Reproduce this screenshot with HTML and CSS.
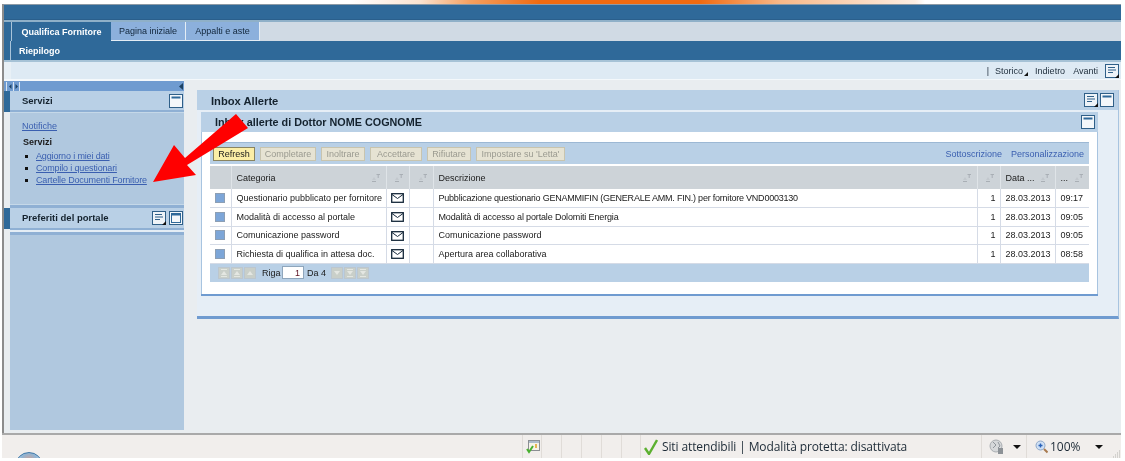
FILE: index.html
```html
<!DOCTYPE html>
<html lang="it">
<head>
    <meta charset="UTF-8">
    <title>Inbox Allerte</title>
    <link rel="stylesheet" href="styles.css">
</head>
<body>
    <svg class="icon-defs" width="0" height="0">
        <symbol id="i-menu" viewBox="0 0 14 14">
            <rect x="0.5" y="0.5" width="13" height="13" fill="#eef3f8" stroke="#2f5f88"/>
            <path d="M3 3.500h7M3 6h8M3 8.500h5" stroke="#2f5f88" fill="none"/>
            <path d="M10 14h4v-4z" fill="#111"/>
        </symbol>
        <symbol id="i-min" viewBox="0 0 14 14">
            <rect x="0.5" y="0.5" width="13" height="13" fill="#f4f7fa" stroke="#2f5f88"/>
            <rect x="2.500" y="2.500" width="9" height="2" fill="#2f6999"/>
        </symbol>
        <symbol id="i-max" viewBox="0 0 14 14">
            <rect x="0.5" y="0.5" width="13" height="13" fill="#f4f7fa" stroke="#2f5f88"/>
            <rect x="2.500" y="2.500" width="9" height="9" fill="none" stroke="#2f6999"/>
            <rect x="2.500" y="2.500" width="9" height="2" fill="#2f6999"/>
        </symbol>
        <symbol id="i-sort" viewBox="0 0 8 8">
            <path d="M2 3 4 6H0z" fill="#c2c8cd"/>
            <path d="M0 7.500h4" stroke="#a9afb5"/>
            <path d="M4.500 .5h3.500M6.200 .5v3.500" stroke="#a9afb5" fill="none"/>
        </symbol>
        <symbol id="i-mail" viewBox="0 0 13 10">
            <rect x="0.7" y="0.7" width="11.6" height="8.6" fill="#fff" stroke="#16283a" stroke-width="1.3"/>
            <path d="M1 1.500 6.500 5.500 12 1.500" fill="none" stroke="#16283a"/>
        </symbol>
        <symbol id="i-pg-up" viewBox="0 0 12 12">
            <rect x="0.500" y="0.500" width="11" height="11" fill="#c9cfc9" stroke="#bcc6ce"/>
            <path d="M6 4 9 8H3z" fill="#e4e7e2"/>
        </symbol>
        <symbol id="i-pg-first" viewBox="0 0 12 12">
            <rect x="0.500" y="0.500" width="11" height="11" fill="#c9cfc9" stroke="#bcc6ce"/>
            <path d="M6 4 9 8H3z" fill="#e4e7e2"/>
            <path d="M3 2.500h6M3 9.500h6" stroke="#e4e7e2"/>
        </symbol>
        <symbol id="i-pg-down" viewBox="0 0 12 12">
            <rect x="0.500" y="0.500" width="11" height="11" fill="#c9cfc9" stroke="#bcc6ce"/>
            <path d="M6 8 9 4H3z" fill="#e4e7e2"/>
        </symbol>
        <symbol id="i-pg-last" viewBox="0 0 12 12">
            <rect x="0.500" y="0.500" width="11" height="11" fill="#c9cfc9" stroke="#bcc6ce"/>
            <path d="M6 8 9 4H3z" fill="#e4e7e2"/>
            <path d="M3 2.500h6M3 9.500h6" stroke="#e4e7e2"/>
        </symbol>
    </svg>

    <div class="page">
        <div class="banner"></div>

        <div class="shell">
            <div class="masthead"></div>

            <div class="tabbar">
                <span class="tab tab-active">Qualifica Fornitore</span>
                <span class="tab tab-home">Pagina iniziale</span>
                <span class="tab tab-bids">Appalti e aste</span>
            </div>
            <div class="subnav"><span class="subnav-item">Riepilogo</span></div>

            <div class="toolstrip">
                <span class="tool-sep">|</span>
                <span class="tool-link tool-history">Storico</span>
                <span class="tool-link tool-back">Indietro</span>
                <span class="tool-link tool-next">Avanti</span>
                <svg class="icon-14 tool-menu"><use href="#i-menu"/></svg>
            </div>

            <div class="workspace">
                <div class="sidebar">
                    <div class="sidebar-grip">
                        <svg class="grip-left" width="20" height="9" viewBox="0 0 20 9">
                            <path d="M.5 0v9M7.500 0v9M13.500 0v9" stroke="#d9e5f0"/>
                            <path d="M5.500 2v5L3 4.500zM9.500 2v5L12 4.500z" fill="#1d4263"/>
                        </svg>
                        <svg width="4" height="7" viewBox="0 0 4 7"><path d="M4 0v7L0 3.500z" fill="#1d4263"/></svg>
                    </div>

                    <div class="side-head">
                        <span class="side-title">Servizi</span>
                        <svg class="icon-14"><use href="#i-min"/></svg>
                    </div>
                    <div class="side-body">
                        <a class="side-link side-top" href="#">Notifiche</a>
                        <div class="side-label">Servizi</div>
                        <ul class="side-list">
                            <li><a class="side-link" href="#">Aggiorno i miei dati</a></li>
                            <li><a class="side-link" href="#">Compilo i questionari</a></li>
                            <li><a class="side-link" href="#">Cartelle Documenti Fornitore</a></li>
                        </ul>
                    </div>

                    <div class="side-head side-head-fav">
                        <span class="side-title">Preferiti del portale</span>
                        <svg class="icon-14"><use href="#i-menu"/></svg>
                        <svg class="icon-14"><use href="#i-max"/></svg>
                    </div>
                    <div class="side-rest"></div>
                </div>

                <div class="main">
                    <div class="outer-panel">
                        <div class="outer-head">
                            <span class="outer-title">Inbox Allerte</span>
                            <svg class="icon-14"><use href="#i-menu"/></svg>
                            <svg class="icon-14"><use href="#i-min"/></svg>
                        </div>
                        <div class="inner-panel">
                            <div class="inner-head">
                                <span class="inner-title">Inbox allerte di Dottor NOME COGNOME</span>
                                <svg class="icon-14"><use href="#i-min"/></svg>
                            </div>
                            <div class="inner-body">
                                <div class="actions">
                                    <button class="btn btn-on">Refresh</button>
                                    <button class="btn btn-complete">Completare</button>
                                    <button class="btn btn-forward">Inoltrare</button>
                                    <button class="btn btn-accept">Accettare</button>
                                    <button class="btn btn-refuse">Rifiutare</button>
                                    <button class="btn btn-read">Impostare su 'Letta'</button>
                                    <a class="action-link action-sub" href="#">Sottoscrizione</a>
                                    <a class="action-link" href="#">Personalizzazione</a>
                                </div>

                                <table class="alerts">
                                    <colgroup>
                                        <col class="c-sel"><col class="c-cat"><col class="c-mail"><col class="c-flag">
                                        <col class="c-desc"><col class="c-num"><col class="c-date"><col class="c-time">
                                    </colgroup>
                                    <thead>
                                        <tr>
                                            <th></th>
                                            <th>Categoria<svg class="sort"><use href="#i-sort"/></svg></th>
                                            <th><svg class="sort"><use href="#i-sort"/></svg></th>
                                            <th><svg class="sort"><use href="#i-sort"/></svg></th>
                                            <th>Descrizione<svg class="sort"><use href="#i-sort"/></svg></th>
                                            <th><svg class="sort"><use href="#i-sort"/></svg></th>
                                            <th>Data ...<svg class="sort"><use href="#i-sort"/></svg></th>
                                            <th>...<svg class="sort"><use href="#i-sort"/></svg></th>
                                        </tr>
                                    </thead>
                                    <tbody>
                                        <tr>
                                            <td><span class="sel-box"></span></td>
                                            <td>Questionario pubblicato per fornitore</td>
                                            <td class="mid"><svg class="mail"><use href="#i-mail"/></svg></td>
                                            <td></td>
                                            <td class="tight-more">Pubblicazione questionario GENAMMIFIN (GENERALE AMM. FIN.) per fornitore VND0003130</td>
                                            <td class="num">1</td>
                                            <td>28.03.2013</td>
                                            <td>09:17</td>
                                        </tr>
                                        <tr class="row-tall">
                                            <td><span class="sel-box"></span></td>
                                            <td>Modalità di accesso al portale</td>
                                            <td class="mid"><svg class="mail"><use href="#i-mail"/></svg></td>
                                            <td></td>
                                            <td class="tight">Modalità di accesso al portale Dolomiti Energia</td>
                                            <td class="num">1</td>
                                            <td>28.03.2013</td>
                                            <td>09:05</td>
                                        </tr>
                                        <tr>
                                            <td><span class="sel-box"></span></td>
                                            <td>Comunicazione password</td>
                                            <td class="mid"><svg class="mail"><use href="#i-mail"/></svg></td>
                                            <td></td>
                                            <td>Comunicazione password</td>
                                            <td class="num">1</td>
                                            <td>28.03.2013</td>
                                            <td>09:05</td>
                                        </tr>
                                        <tr class="row-tall">
                                            <td><span class="sel-box"></span></td>
                                            <td>Richiesta di qualifica in attesa doc.</td>
                                            <td class="mid"><svg class="mail"><use href="#i-mail"/></svg></td>
                                            <td></td>
                                            <td>Apertura area collaborativa</td>
                                            <td class="num">1</td>
                                            <td>28.03.2013</td>
                                            <td>08:58</td>
                                        </tr>
                                    </tbody>
                                </table>

                                <div class="pager">
                                    <svg class="pg"><use href="#i-pg-first"/></svg>
                                    <svg class="pg"><use href="#i-pg-first"/></svg>
                                    <svg class="pg"><use href="#i-pg-up"/></svg>
                                    <span class="pg-label">Riga</span>
                                    <span class="pg-input">1</span>
                                    <span class="pg-of">Da 4</span>
                                    <svg class="pg"><use href="#i-pg-down"/></svg>
                                    <svg class="pg"><use href="#i-pg-last"/></svg>
                                    <svg class="pg"><use href="#i-pg-last"/></svg>
                                </div>
                            </div>
                        </div>
                    </div>
                </div>
            </div>

            <div class="statusbar">
                <span class="st-cell st-a"><span class="orb"></span></span>
                <span class="st-cell st-icon">
                    <svg width="15" height="15" viewBox="0 0 15 15">
                        <rect x="2.500" y="1.500" width="11" height="10" fill="#f5f3e8" stroke="#8b8f93"/>
                        <rect x="3" y="2" width="10" height="2" fill="#aebccc"/>
                        <path d="M10 5v4" stroke="#e0a020" stroke-width="1.500"/>
                        <path d="M1 10l2 3 4-6" fill="none" stroke="#48b030" stroke-width="2"/>
                    </svg>
                </span>
                <span class="st-cell st-b"></span>
                <span class="st-cell st-b"></span>
                <span class="st-cell st-b"></span>
                <span class="st-cell st-b"></span>
                <span class="st-cell st-b st-b-last"></span>
                <span class="st-cell st-zone">
                    <svg width="14" height="16" viewBox="0 0 14 16"><path d="M1 9l4 6 8-14" fill="none" stroke="#5cb030" stroke-width="2.400"/></svg>
                    <span class="st-text st-zone-text">Siti attendibili | Modalità protetta: disattivata</span>
                </span>
                <span class="st-cell st-globe">
                    <svg width="16" height="16" viewBox="0 0 16 16">
                        <circle cx="7" cy="7" r="6" fill="#d6d8da" stroke="#a9adb1"/>
                        <path d="M4 3l3 3-3 3M9 3l2 4-2 2" fill="none" stroke="#8f959a"/>
                        <rect x="9" y="9" width="5" height="6" fill="#8c9196"/>
                    </svg>
                    <span class="st-arrow"></span>
                </span>
                <span class="st-cell st-zoom">
                    <svg width="13" height="14" viewBox="0 0 13 14">
                        <circle cx="5.500" cy="5.500" r="4.500" fill="#cfe0f5" stroke="#8fa8c8"/>
                        <path d="M3.500 5.500h4M5.500 3.500v4" stroke="#2a62b8" stroke-width="1.400"/>
                        <path d="M9 9l3.500 3.500" stroke="#a87a50" stroke-width="2"/>
                    </svg>
                    <span class="st-text st-pct">100%</span>
                    <span class="st-arrow st-arrow-zoom"></span>
                </span>
                <svg class="st-grip" width="8" height="8" viewBox="0 0 8 8">
                    <path d="M6 1h1M4 3h1M6 3h1M2 5h1M4 5h1M6 5h1M0 7h1M2 7h1M4 7h1M6 7h1" stroke="#b5b5b0"/>
                </svg>
            </div>
        </div>

        <svg class="arrow" width="110" height="80" viewBox="0 0 110 80">
            <path d="M2 70 23 33 34 46 85 2 97 16 36 53 45 63z" fill="#ff0000"/>
        </svg>
    </div>
</body>
</html>
```

FILE: styles.css
```css
* {
    margin: 0;
    padding: 0;
    box-sizing: border-box;
}

body {
    font-family: "Liberation Sans", Arial, sans-serif;
    font-size: 9px;
    color: #1a1a1a;
    background: #fff;
    overflow: hidden;
}

a {
    color: #3a5fb0;
}

.icon-defs {
    display: block;
    height: 0;
}

.page {
    position: relative;
    width: 1125px;
    height: 461px;
    overflow: hidden;
    background: #fff;
    filter: blur(0.35px);
}

.banner {
    height: 4px;
    background: linear-gradient(90deg, #fff 350px, #fbe3d0 420px, #f5a060 470px, #f06a10 540px, #f06a10 700px, #f8b888 780px, #fdeee2 915px, #fff 925px);
}

.shell {
    width: 1119px;
    margin-left: 2px;
    border-left: 2px solid #8c8c8c;
    border-top: 1px solid #8c9aa6;
}

.icon-14 {
    display: block;
    width: 14px;
    height: 14px;
    flex: none;
}

/* header */
.masthead {
    height: 15px;
    background: #2f6999;
    border-bottom: 1px solid #2a5f8c;
}

.tabbar {
    display: flex;
    height: 21px;
    padding-left: 7px;
    background: linear-gradient(90deg, #2f6999 7px, #d0dae4 7px);
    border-top: 2px solid #8fb0c8;
}

.tab {
    display: flex;
    align-items: center;
    justify-content: center;
    height: 19px;
    color: #10253a;
    background: #8cb0dc;
    border-right: 1px solid #e4edf5;
    border-bottom: 1px solid #e4edf5;
}

.tab-active {
    width: 100px;
    color: #fff;
    font-weight: bold;
    background: #2f6999;
    border-left: 1px solid #a8c4da;
    border-right: 0;
    border-bottom: 0;
}

.tab-home {
    width: 75px;
}

.tab-bids {
    width: 74px;
}

.subnav {
    height: 21px;
    padding-left: 6px;
    background: #2f6999;
    border-bottom: 2px solid #a6c2d6;
}

.subnav-item {
    display: block;
    height: 19px;
    padding-left: 8px;
    line-height: 20px;
    color: #fff;
    font-weight: bold;
    border-left: 1px solid #a8c4da;
}

.toolstrip {
    display: flex;
    align-items: center;
    justify-content: flex-end;
    height: 18px;
    padding-right: 2px;
    background: linear-gradient(90deg, #e8f0f6 7px, #deeaf4 7px);
    color: #1d2c3a;
    border-bottom: 1px solid #f4f8fb;
}

.tool-sep {
    margin-right: 6px;
}

.tool-history {
    position: relative;
    margin-right: 12px;
}

.tool-history::after {
    content: "";
    position: absolute;
    right: -5px;
    bottom: 0;
    border-style: solid;
    border-width: 0 0 4px 4px;
    border-color: transparent transparent #111 transparent;
}

.tool-back {
    margin-right: 8px;
}

.tool-next {
    margin-right: 7px;
}

/* layout below the header */
.workspace {
    display: flex;
    height: 353px;
    background: #e9edf0;
}

.sidebar {
    width: 180px;
    flex: none;
    display: flex;
    flex-direction: column;
}

.sidebar-grip {
    display: flex;
    align-items: center;
    justify-content: space-between;
    height: 11px;
    padding: 1px 1px 0 2px;
    background: #6f9bd0;
    border-top: 1px solid #f4f8fb;
}

.side-head {
    display: flex;
    align-items: center;
    gap: 3px;
    height: 21px;
    padding: 0 1px 0 12px;
    margin-left: 6px;
    background: #b9d0e6;
    border-bottom: 2px solid #8fb0d4;
    position: relative;
}

.side-head::before {
    content: "";
    position: absolute;
    left: -6px;
    top: 0;
    width: 6px;
    height: 21px;
    background: #2f6999;
}

.side-title {
    flex: 1;
    font-size: 9.500px;
    font-weight: bold;
    color: #14222e;
}

.side-body {
    height: 93px;
    margin-left: 6px;
    padding: 8px 0 0 12px;
    background: #b0c8df;
    border-top: 1px solid #c5d8e8;
    border-bottom: 1px solid #c5d8e8;
}

.side-link {
    font-size: 9px;
}

.side-top {
    display: block;
    height: 15px;
}

.side-label {
    margin: 1px 0 0 1px;
    height: 13px;
    font-weight: bold;
    font-size: 9px;
}

.side-list {
    list-style: none;
    letter-spacing: -0.15px;
}

.side-list li {
    position: relative;
    height: 12px;
    padding-left: 14px;
    line-height: 12px;
}

.side-list li::before {
    content: "";
    position: absolute;
    left: 3px;
    top: 5px;
    width: 3px;
    height: 3px;
    background: #111;
}

.side-head-fav {
    height: 25px;
    border-top: 3px solid #8fb0d4;
    border-bottom: 2px solid #8fb0d4;
}

.side-head-fav .side-title {
    padding-bottom: 2px;
}

.side-rest {
    height: 200px;
    margin-left: 6px;
    background: linear-gradient(#8fb0d4 3px, #b0c8df 3px);
    border-top: 2px solid #e4edf5;
}

.main {
    flex: 1;
    padding: 10px 2px 0 13px;
}

.outer-panel {
    height: 229px;
    background: #e6eef6;
    border-right: 1px solid #a8c4e0;
    border-bottom: 3px solid #6f9bd0;
}

.outer-head {
    display: flex;
    align-items: center;
    gap: 2px;
    height: 20px;
    padding: 0 4px 0 14px;
    background: #b9d0e6;
}

.outer-title {
    flex: 1;
    padding-top: 2px;
    font-size: 11.200px;
    font-weight: bold;
    color: #14222e;
}

.inner-panel {
    width: 897px;
    margin: 2px 0 0 4px;
    border-bottom: 2px solid #6f9bd0;
}

.inner-head {
    display: flex;
    align-items: center;
    justify-content: space-between;
    height: 20px;
    padding: 0 3px 0 14px;
    background: #b9d0e6;
}

.inner-title {
    font-size: 10.800px;
    font-weight: bold;
    color: #14222e;
}

.inner-body {
    height: 162px;
    padding: 10px 8px 0 8px;
    background: #fff;
    border-left: 1px solid #a8c4e0;
    border-right: 1px solid #a8c4e0;
}

.actions {
    display: flex;
    align-items: center;
    gap: 5px;
    height: 22px;
    padding: 1px 5px 0 3px;
    background: #b9d0e6;
    border-top: 1px solid #9cb8d4;
}

.btn {
    height: 14px;
    font-family: inherit;
    font-size: 9px;
    color: #9a9a90;
    background: #e6e3d3;
    border: 1px solid #c8c4ae;
}

.btn-on {
    width: 42px;
    color: #1a1a1a;
    background: #fbeea6;
    border-color: #8a8460;
}

.btn-complete {
    width: 56px;
}

.btn-forward {
    width: 44px;
}

.btn-accept {
    width: 52px;
}

.btn-refuse {
    width: 44px;
}

.btn-read {
    width: 89px;
}

.action-link {
    text-decoration: none;
    font-size: 9px;
}

.action-sub {
    margin-left: auto;
    margin-right: 4px;
}

.alerts {
    width: 879px;
    margin-top: 2px;
    table-layout: fixed;
    border-collapse: collapse;
}

.c-sel {
    width: 21px;
}

.c-cat {
    width: 155px;
}

.c-mail {
    width: 23px;
}

.c-flag {
    width: 24px;
}

.c-desc {
    width: 544px;
}

.c-num {
    width: 23px;
}

.c-date {
    width: 55px;
}

.c-time {
    width: 34px;
}

.alerts th {
    position: relative;
    height: 23px;
    padding-left: 5px;
    text-align: left;
    font-weight: normal;
    background: #cdd3d8;
    border-left: 1px solid #dfe4e8;
}

.alerts th:first-child {
    border-left: 0;
}

.sort {
    position: absolute;
    right: 6px;
    top: 8px;
    width: 8px;
    height: 8px;
}

.alerts td {
    height: 18px;
    padding: 0 0 0 5px;
    white-space: nowrap;
    overflow: hidden;
    border: 1px solid #d5dbe6;
    border-top: 0;
}

.alerts .row-tall td {
    height: 19px;
}

.alerts td:first-child {
    border-left: 0;
}

.alerts td:last-child {
    border-right: 0;
}

.alerts .mid {
    padding: 0;
    text-align: center;
}

.alerts .num {
    padding: 0 4px 0 0;
    text-align: right;
}

.alerts .tight {
    letter-spacing: -0.15px;
}

.alerts .tight-more {
    letter-spacing: -0.22px;
}

.sel-box {
    display: block;
    width: 10px;
    height: 10px;
    background: #7da6d8;
    border: 1px solid #8d9fb4;
}

.mail {
    display: block;
    width: 13px;
    height: 10px;
    margin: 1px auto 0;
}

.pager {
    display: flex;
    align-items: center;
    height: 18px;
    padding-left: 8px;
    background: #b9d0e6;
}

.pg {
    width: 12px;
    height: 12px;
    margin-right: 1px;
    flex: none;
}

.pg-label {
    margin-left: 5px;
    width: 20px;
}

.pg-input {
    width: 22px;
    height: 13px;
    padding-right: 3px;
    line-height: 13px;
    text-align: right;
    color: #5a1020;
    background: #fff;
    border: 1px solid #8fa6bc;
}

.pg-of {
    width: 24px;
    margin-left: 3px;
}

/* browser status bar */
.statusbar {
    display: flex;
    align-items: center;
    height: 25px;
    color: #1c2a36;
    background: #f1eeec;
    border-top: 2px solid #a9a9a9;
    margin-left: -2px;
    position: relative;
}

.st-cell {
    display: flex;
    align-items: center;
    height: 23px;
    border-right: 1px solid #e0dcd8;
}

.st-a {
    position: relative;
    width: 521px;
    overflow: hidden;
}

.orb {
    position: absolute;
    left: 13px;
    top: 17px;
    width: 28px;
    height: 28px;
    border-radius: 50%;
    background: radial-gradient(circle at 50% 30%, #d8a090 0, #8fb4d4 35%, #dfe8f0 70%);
    border: 1px solid #3f78a8;
}

.st-icon {
    width: 19px;
    padding-left: 3px;
}

.st-b {
    width: 20px;
}

.st-b-last {
    width: 19px;
}

.st-zone {
    width: 341px;
    gap: 4px;
    padding-left: 3px;
}

.st-text {
    font-family: "Open Sans", sans-serif;
    font-size: 12px;
}

.st-zone-text {
    letter-spacing: -0.12px;
}

.st-globe {
    width: 45px;
    padding-left: 7px;
}

.st-arrow {
    width: 0;
    height: 0;
    margin-left: 8px;
    border-style: solid;
    border-width: 4px 4px 0 4px;
    border-color: #111 transparent transparent transparent;
}

.st-zoom {
    border-right: 0;
    padding-left: 8px;
    gap: 2px;
}

.st-arrow-zoom {
    margin-left: 12px;
}

.st-grip {
    position: absolute;
    right: 0;
    bottom: 0;
}

/* red arrow drawn over the page */
.arrow {
    position: absolute;
    left: 151px;
    top: 112px;
}
```
